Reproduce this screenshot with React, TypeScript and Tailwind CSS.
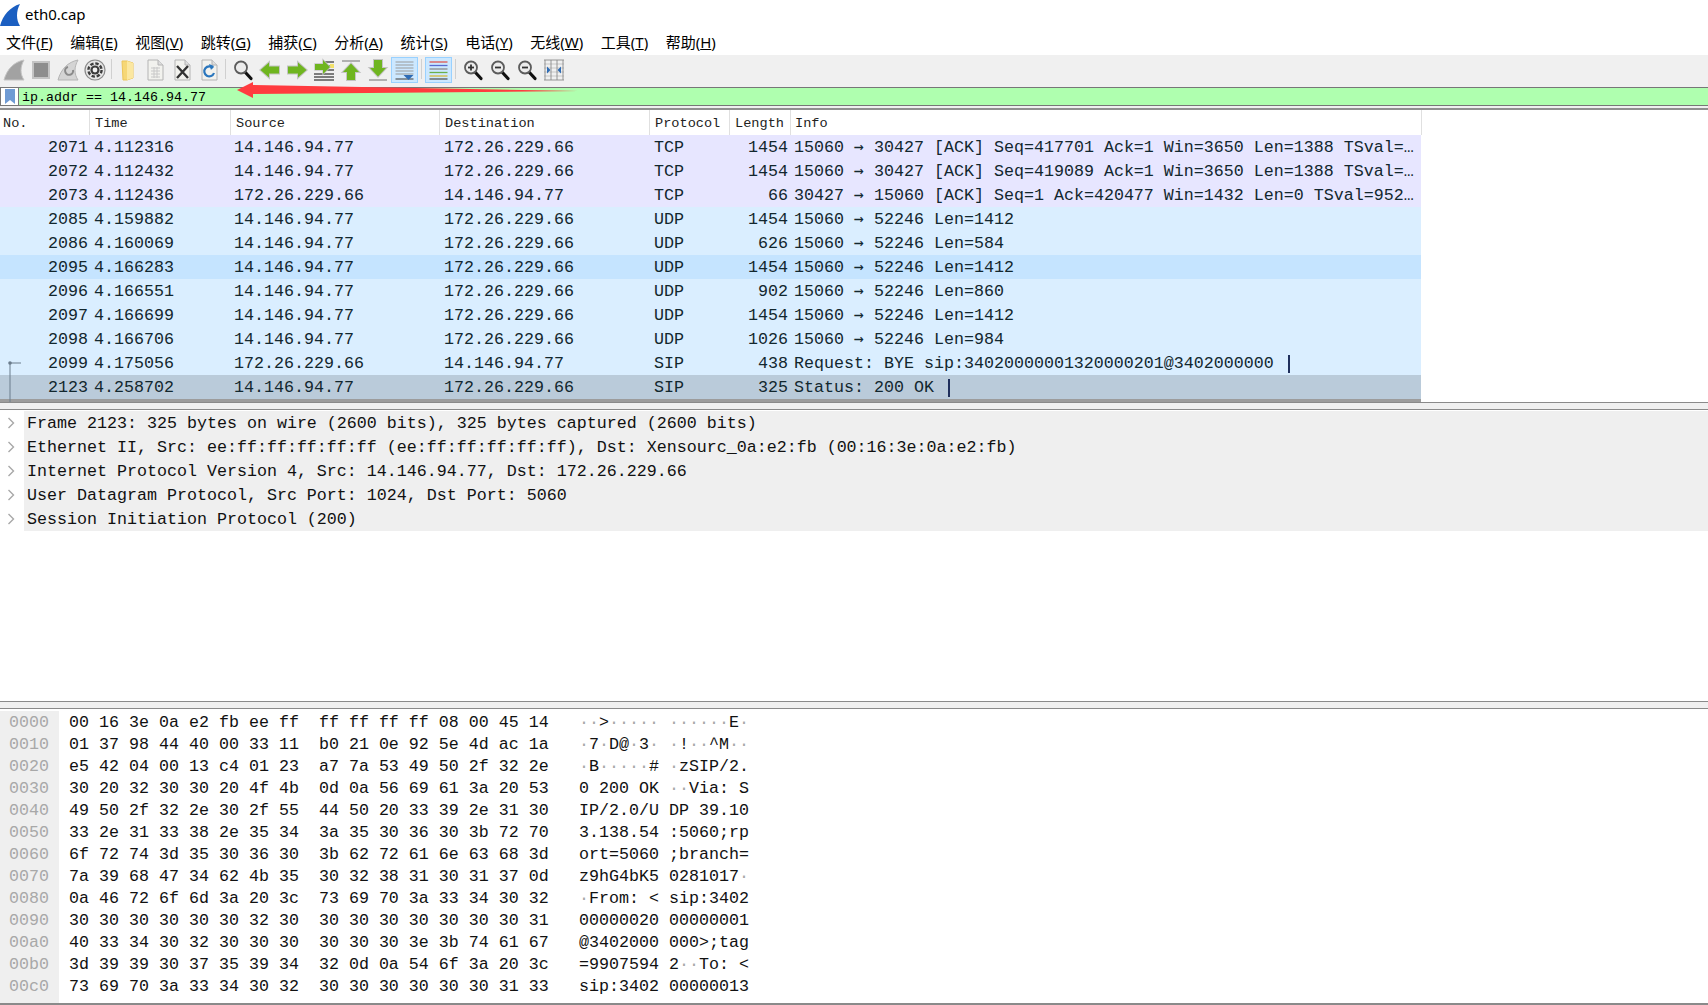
import type { ReactNode } from 'react'

const MONO = "font-['Liberation_Mono','DejaVu_Sans_Mono',monospace]"

const menus = [
  ['文件', 'F'],
  ['编辑', 'E'],
  ['视图', 'V'],
  ['跳转', 'G'],
  ['捕获', 'C'],
  ['分析', 'A'],
  ['统计', 'S'],
  ['电话', 'Y'],
  ['无线', 'W'],
  ['工具', 'T'],
  ['帮助', 'H'],
]

const A = '14.146.94.77'
const B = '172.26.229.66'
const packets = [
  { no: 2071, time: '4.112316', src: A, dst: B, proto: 'TCP', len: 1454, ports: '15060 → 30427', info: ' [ACK] Seq=417701 Ack=1 Win=3650 Len=1388 TSval=…', bg: 'bg-[#e7e6ff]' },
  { no: 2072, time: '4.112432', src: A, dst: B, proto: 'TCP', len: 1454, ports: '15060 → 30427', info: ' [ACK] Seq=419089 Ack=1 Win=3650 Len=1388 TSval=…', bg: 'bg-[#e7e6ff]' },
  { no: 2073, time: '4.112436', src: B, dst: A, proto: 'TCP', len: 66, ports: '30427 → 15060', info: ' [ACK] Seq=1 Ack=420477 Win=1432 Len=0 TSval=952…', bg: 'bg-[#e7e6ff]' },
  { no: 2085, time: '4.159882', src: A, dst: B, proto: 'UDP', len: 1454, ports: '15060 → 52246', info: ' Len=1412', bg: 'bg-[#daeeff]' },
  { no: 2086, time: '4.160069', src: A, dst: B, proto: 'UDP', len: 626, ports: '15060 → 52246', info: ' Len=584', bg: 'bg-[#daeeff]' },
  { no: 2095, time: '4.166283', src: A, dst: B, proto: 'UDP', len: 1454, ports: '15060 → 52246', info: ' Len=1412', bg: 'bg-[#c5e4ff]' },
  { no: 2096, time: '4.166551', src: A, dst: B, proto: 'UDP', len: 902, ports: '15060 → 52246', info: ' Len=860', bg: 'bg-[#daeeff]' },
  { no: 2097, time: '4.166699', src: A, dst: B, proto: 'UDP', len: 1454, ports: '15060 → 52246', info: ' Len=1412', bg: 'bg-[#daeeff]' },
  { no: 2098, time: '4.166706', src: A, dst: B, proto: 'UDP', len: 1026, ports: '15060 → 52246', info: ' Len=984', bg: 'bg-[#daeeff]' },
  { no: 2099, time: '4.175056', src: B, dst: A, proto: 'SIP', len: 438, ports: '', info: 'Request: BYE sip:34020000001320000201@3402000000', bg: 'bg-[#daeeff]', mark: true, start: true },
  { no: 2123, time: '4.258702', src: A, dst: B, proto: 'SIP', len: 325, ports: '', info: 'Status: 200 OK', bg: 'bg-[#bacbda]', mark: true, end: true },
]

const tree = [
  'Frame 2123: 325 bytes on wire (2600 bits), 325 bytes captured (2600 bits)',
  'Ethernet II, Src: ee:ff:ff:ff:ff:ff (ee:ff:ff:ff:ff:ff), Dst: Xensourc_0a:e2:fb (00:16:3e:0a:e2:fb)',
  'Internet Protocol Version 4, Src: 14.146.94.77, Dst: 172.26.229.66',
  'User Datagram Protocol, Src Port: 1024, Dst Port: 5060',
  'Session Initiation Protocol (200)',
]

const hexRows = [
  ['0000', '00 16 3e 0a e2 fb ee ff', 'ff ff ff ff 08 00 45 14'],
  ['0010', '01 37 98 44 40 00 33 11', 'b0 21 0e 92 5e 4d ac 1a'],
  ['0020', 'e5 42 04 00 13 c4 01 23', 'a7 7a 53 49 50 2f 32 2e'],
  ['0030', '30 20 32 30 30 20 4f 4b', '0d 0a 56 69 61 3a 20 53'],
  ['0040', '49 50 2f 32 2e 30 2f 55', '44 50 20 33 39 2e 31 30'],
  ['0050', '33 2e 31 33 38 2e 35 34', '3a 35 30 36 30 3b 72 70'],
  ['0060', '6f 72 74 3d 35 30 36 30', '3b 62 72 61 6e 63 68 3d'],
  ['0070', '7a 39 68 47 34 62 4b 35', '30 32 38 31 30 31 37 0d'],
  ['0080', '0a 46 72 6f 6d 3a 20 3c', '73 69 70 3a 33 34 30 32'],
  ['0090', '30 30 30 30 30 30 32 30', '30 30 30 30 30 30 30 31'],
  ['00a0', '40 33 34 30 32 30 30 30', '30 30 30 3e 3b 74 61 67'],
  ['00b0', '3d 39 39 30 37 35 39 34', '32 0d 0a 54 6f 3a 20 3c'],
  ['00c0', '73 69 70 3a 33 34 30 32', '30 30 30 30 30 30 31 33'],
]

function Ascii({ hex }: { hex: string }) {
  return (
    <>
      {hex.split(' ').map((h, i) => {
        const code = parseInt(h, 16)
        if (code >= 32 && code < 127) return <span key={i}>{String.fromCharCode(code)}</span>
        return (
          <span key={i} className="text-[#a8a8a8]">
            ·
          </span>
        )
      })}
    </>
  )
}

function Icon({ children, active }: { children: ReactNode; active?: boolean }) {
  return (
    <div className="flex h-[28px] w-[27px] shrink-0 items-center justify-center pt-[2px]">
      <svg
        width="24"
        height="24"
        viewBox="0 0 24 24"
        className={active ? 'h-[26px] w-[27px] border border-[#99d1ff] bg-[#cce8ff]' : ''}
      >
        {children}
      </svg>
    </div>
  )
}

function Sep({ w }: { w: string }) {
  return (
    <div className={`flex h-[28px] shrink-0 items-center justify-center ${w}`}>
      <div className="h-[20px] w-px bg-[#d0d0d0]" />
    </div>
  )
}

function Magnifier({ sign }: { sign?: 'plus' | 'minus' }) {
  return (
    <>
      <path d="M14 14 L20 20.5" stroke="#111" strokeWidth="3.2" strokeLinecap="round" />
      <circle cx="10" cy="9.5" r="6" fill="#ececec" stroke="#5c5c5c" strokeWidth="1.8" />
      {sign && <path d="M7 9.5 H13" stroke="#333" strokeWidth="1.8" />}
      {sign === 'plus' && <path d="M10 6.5 V12.5" stroke="#333" strokeWidth="1.8" />}
    </>
  )
}

function Page({ children }: { children?: ReactNode }) {
  return (
    <>
      <path d="M5 2 H15 L20 7 V22 H5 Z" fill="#f2f2ee" stroke="#b4b4b4" />
      <path d="M15 2 V7 H20" fill="#ddd" stroke="#b4b4b4" />
      {children}
    </>
  )
}

const green = '#6fb51f'

function Toolbar() {
  return (
    <div className="flex h-[28px] items-center bg-[#f0f0f0]">
      <Icon>
        <path d="M2 22 C5 11 12 4 22 2 C18 9 18 16 22 22 Z" fill="#a2a2a2" stroke="#c4c4c4" />
      </Icon>
      <Icon>
        <rect x="4" y="4" width="16" height="16" fill="#8e8e8e" stroke="#c4c4c4" strokeWidth="2" />
      </Icon>
      <Icon>
        <path d="M2 22 C5 11 12 4 22 2 C18 9 18 16 22 22 Z" fill="#d4d4d4" stroke="#b4b4b4" />
        <path d="M17 12 A4 4 0 1 1 12 9" fill="none" stroke="#8a8a8a" strokeWidth="2" />
      </Icon>
      <Icon>
        <circle cx="12" cy="12" r="10" fill="#e6e6e6" stroke="#8a8a8a" strokeWidth="1.2" />
        <circle cx="12" cy="12" r="6.6" fill="none" stroke="#3c3c3c" strokeWidth="2.4" strokeDasharray="3.4 1.8" />
        <circle cx="12" cy="12" r="4.6" fill="#3c3c3c" />
        <circle cx="12" cy="12" r="2.4" fill="#f2f2f2" />
      </Icon>
      <Sep w="w-[6px]" />
      <Icon>
        <path d="M6 3 H11 L17 5 V20 L11 22 H7 Z" fill="#f6d776" stroke="#ecc55a" />
        <path d="M11 3 V22 L17 20 V5 Z" fill="#fbe7a0" />
      </Icon>
      <Icon>
        <Page>
          <path d="M8 10 H17 M8 13 H17 M8 16 H17 M8 19 H17 M11 9 V20 M14 9 V20" stroke="#c8c8c8" strokeWidth="1" />
        </Page>
      </Icon>
      <Icon>
        <Page>
          <path d="M7 8 L18 20 M18 8 L7 20" stroke="#333" strokeWidth="2.4" />
        </Page>
      </Icon>
      <Icon>
        <Page>
          <path d="M16 10 A5 5 0 1 0 17 15" fill="none" stroke="#2a76bd" strokeWidth="2.2" />
          <path d="M12 6 L17 8 L14 12 Z" fill="#2a76bd" />
        </Page>
      </Icon>
      <Sep w="w-[7px]" />
      <Icon>
        <Magnifier />
      </Icon>
      <Icon>
        <path d="M2.5 12 L11 4.5 V8.5 H21 V15.5 H11 V19.5 Z" fill={green} stroke="#c4c4c4" strokeWidth="2" paintOrder="stroke" />
      </Icon>
      <Icon>
        <path d="M21.5 12 L13 4.5 V8.5 H3 V15.5 H13 V19.5 Z" fill={green} stroke="#c4c4c4" strokeWidth="2" paintOrder="stroke" />
      </Icon>
      <Icon>
        <path d="M12 4 H22 M14 8 H22 M14 12 H22 M2 16 H22 M2 19 H22 M2 22 H22" stroke="#555" strokeWidth="1.3" />
        <path d="M18 6 H22 V10 H18 Z" fill="#f3e16a" />
        <path d="M18 9 L11 2 V6 H3 V12 H11 V16 Z" fill={green} stroke="#c4c4c4" strokeWidth="1.4" paintOrder="stroke" />
      </Icon>
      <Icon>
        <path d="M3 3 H21" stroke="#b0b0b0" strokeWidth="2" />
        <path d="M12 5.5 L20 14 H16 V22 H8 V14 H4 Z" fill={green} stroke="#c4c4c4" strokeWidth="2" paintOrder="stroke" />
      </Icon>
      <Icon>
        <path d="M3 22 H21" stroke="#b0b0b0" strokeWidth="2" />
        <path d="M12 18.5 L20 10 H16 V2 H8 V10 H4 Z" fill={green} stroke="#c4c4c4" strokeWidth="2" paintOrder="stroke" />
      </Icon>
      <Icon active>
        <path d="M3 4 H21 M3 7 H21 M3 10 H21 M3 13 H21 M3 16 H21" stroke="#9a9a9a" strokeWidth="1.1" />
        <path d="M3 21 H21" stroke="#555" strokeWidth="1.2" />
        <path d="M11 17 H21 L16 22 Z" fill="#2e6cb5" />
      </Icon>
      <Sep w="w-[7px]" />
      <Icon active>
        <path d="M3 4 H21" stroke="#e0564e" strokeWidth="1.3" />
        <path d="M3 7.5 H21" stroke="#5a6ad0" strokeWidth="1.3" />
        <path d="M3 11 H21" stroke="#8a8a8a" strokeWidth="1.3" />
        <path d="M3 14.5 H21" stroke="#6ab04c" strokeWidth="1.3" />
        <path d="M3 18 H21" stroke="#d6b93a" strokeWidth="1.3" />
        <path d="M3 21 H21" stroke="#555" strokeWidth="1.3" />
      </Icon>
      <Sep w="w-[7px]" />
      <Icon>
        <Magnifier sign="plus" />
      </Icon>
      <Icon>
        <Magnifier sign="minus" />
      </Icon>
      <Icon>
        <Magnifier sign="minus" />
      </Icon>
      <Icon>
        <path d="M2 6 H22 M2 10 H22 M2 14 H22 M2 18 H22" stroke="#c6c6c6" />
        <path d="M2 22 H22 M2 2 H22 M9 2 V22 M15 2 V22 M3 2 V22 M21 2 V22" stroke="#8a8a8a" strokeWidth="0.9" />
        <path d="M8.5 12 L5 8.5 V15.5 Z M15.5 12 L19 8.5 V15.5 Z" fill="#2e6cb5" />
      </Icon>
    </div>
  )
}

export default function App() {
  return (
    <div className="relative flex h-[1005px] w-[1708px] flex-col overflow-hidden bg-white text-black">
      {/* title */}
      <div className="flex h-[30px] items-center pb-[2px]">
        <svg width="20" height="24" viewBox="0 0 20 24" className="shrink-0">
          <path d="M0 24 C3 13 10 5 20 2 C16 9 16 18 20 24 Z" fill="#1b5fc1" />
        </svg>
        <span className="ml-[5px] font-['Noto_Sans',sans-serif] text-[15px]">eth0.cap</span>
      </div>

      {/* menu */}
      <div className="flex h-[25px] items-center gap-[17.5px] pl-[6px] font-['Noto_Sans','Noto_Sans_CJK_SC',sans-serif] text-[15px]">
        {menus.map(([label, key]) => (
          <span key={key} className="whitespace-nowrap">
            {label}(<span className="underline">{key}</span>)
          </span>
        ))}
      </div>

      <Toolbar />

      {/* display filter */}
      <div className="flex h-[25px] flex-col bg-[#f0f0f0] pt-[4px]">
        <div className="flex h-[19px] items-stretch border-b border-t border-[#777] bg-[#afffaf]">
          <div className="flex w-[19px] items-center justify-center border-x border-[#777] bg-white">
            <svg width="10" height="15" viewBox="0 0 10 15">
              <path d="M0 0 H10 V15 L5 11 L0 15 Z" fill="#6f9bd4" />
            </svg>
          </div>
          <span className={`pl-[3px] text-[13.33px] leading-[19px] ${MONO}`}>ip.addr == 14.146.94.77</span>
        </div>
      </div>

      <div className="h-[2px] bg-[#8f8f8f]" />

      {/* packet list */}
      <div className={`h-[292px] text-[16.67px] ${MONO}`}>
        <div className="flex h-[25px] w-[1422px] items-center border-r border-[#e0e0e0] text-[13.6px] text-[#222]">
          <div className="h-full w-[90px] border-r border-[#e0e0e0] pl-[3px] leading-[27px]">No.</div>
          <div className="h-full w-[141px] border-r border-[#e0e0e0] pl-[5px] leading-[27px]">Time</div>
          <div className="h-full w-[209px] border-r border-[#e0e0e0] pl-[5px] leading-[27px]">Source</div>
          <div className="h-full w-[210px] border-r border-[#e0e0e0] pl-[5px] leading-[27px]">Destination</div>
          <div className="h-full w-[80px] border-r border-[#e0e0e0] pl-[5px] leading-[27px]">Protocol</div>
          <div className="h-full w-[61px] border-r border-[#e0e0e0] pl-[5px] leading-[27px]">Length</div>
          <div className="h-full flex-1 pl-[4px] leading-[27px]">Info</div>
        </div>
        {packets.map((p) => (
          <div key={p.no} className={`relative flex h-[24px] w-[1421px] items-center whitespace-pre pt-[2px] text-[#12272e] ${p.bg}`}>
            <div className="w-[90px] pr-[2px] text-right">{p.no}</div>
            <div className="w-[141px] pl-[4px]">{p.time}</div>
            <div className="w-[209px] pl-[3px]">{p.src}</div>
            <div className="w-[210px] pl-[4px]">{p.dst}</div>
            <div className="w-[80px] pl-[4px]">{p.proto}</div>
            <div className="w-[61px] pr-[3px] text-right">{p.len}</div>
            <div className="flex flex-1 items-center pl-[3px]">
              {p.ports && (
                <>
                  {p.ports.slice(0, 6)}
                  <span className="font-['DejaVu_Sans_Mono',monospace] text-[16.6px]">→</span>
                  {p.ports.slice(7)}
                </>
              )}
              {p.info}
              {p.mark && <span className="ml-[14px] inline-block h-[18px] w-[2px] bg-[#1f2f5c]" />}
            </div>
            {p.start && (
              <svg width="16" height="24" className="absolute left-[5px] top-0">
                <path d="M5 12 V24 M5 12 H16" stroke="#6b7c8c" strokeWidth="1" />
                <circle cx="5" cy="12" r="1.8" fill="#6b7c8c" />
              </svg>
            )}
            {p.end && (
              <svg width="14" height="27" className="absolute left-[5px] top-0">
                <path d="M5 0 V27" stroke="#6b7c8c" strokeWidth="1" />
              </svg>
            )}
          </div>
        ))}
        <div className="h-[3px] w-[1421px] bg-[#9c9c9c]" />
      </div>

      <div className="h-[8px] border-y border-[#8a8a8a] bg-[#f0f0f0]" />

      {/* packet details */}
      <div className={`h-[292px] pt-px text-[16.67px] text-[#111] ${MONO}`}>
        {tree.map((t) => (
          <div key={t} className="flex h-[24px] items-center">
            <div className="flex w-[24px] shrink-0 justify-center pr-[3px]">
              <svg width="8" height="12" viewBox="0 0 8 12">
                <path d="M1.5 1 L6.5 6 L1.5 11" fill="none" stroke="#a8a8a8" strokeWidth="1.4" />
              </svg>
            </div>
            <div className="flex h-full flex-1 items-center whitespace-pre bg-[#efefef] pl-[3px] pt-[2px]">{t}</div>
          </div>
        ))}
      </div>

      <div className="h-[8px] border-y border-[#8a8a8a] bg-[#f0f0f0]" />

      {/* packet bytes */}
      <div className={`flex-1 text-[16.67px] text-[#111] ${MONO}`}>
        {hexRows.map(([off, a, b], i) => (
          <div key={off} className={`flex h-[22px] items-center whitespace-pre ${i === 0 ? 'mt-[2px]' : ''}`}>
            <div className="flex h-full w-[59px] shrink-0 items-center bg-[#efefef] pl-[9px] text-[#a8a8a8]">{off}</div>
            <div className="ml-[10px] w-[510px] shrink-0">
              {a}  {b}
            </div>
            <div>
              <Ascii hex={a} /> <Ascii hex={b} />
            </div>
          </div>
        ))}
        <div className="h-[6px] w-[59px] bg-[#efefef]" />
      </div>
      <div className="h-[2px] bg-[#8a8a8a]" />

      {/* red arrow drawn over the filter bar */}
      <svg width="360" height="20" viewBox="0 0 360 20" className="pointer-events-none absolute left-[230px] top-[80px]">
        <path d="M7 10 L23 2 L23 5 L348 11 L23 14 L23 18 Z" fill="#ff3b3f" />
      </svg>
    </div>
  )
}
